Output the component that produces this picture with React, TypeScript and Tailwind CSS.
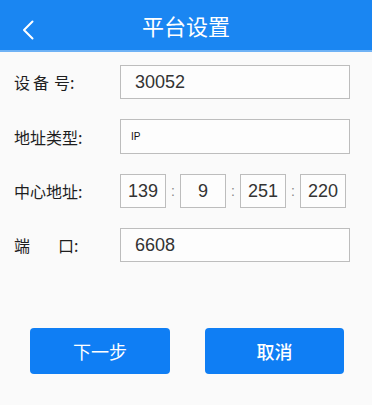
import React from "react";

const cjk = { fontFamily: '"Noto Sans CJK SC", "Noto Sans", sans-serif' };
const num = { fontFamily: '"Liberation Sans", Arial, sans-serif' };

function Label({ children }: { children: React.ReactNode }) {
  return (
    <div className="w-[106px] shrink-0 flex text-[16px] text-[#1e1e1e] leading-none" style={cjk}>
      {children}
    </div>
  );
}

function Box({ v }: { v: string }) {
  return (
    <div
      className="w-[46px] h-[34px] border border-[#bdbdbd] bg-[#fdfdfd] flex items-center justify-center text-[18px] text-[#333]"
      style={num}
    >
      {v}
    </div>
  );
}

function Colon() {
  return (
    <div className="w-[14px] flex items-center justify-center text-[14px] text-[#888]" style={num}>
      :
    </div>
  );
}

export default function App() {
  return (
    <div className="w-[372px] h-[405px] bg-[#fafafa] flex flex-col">
      <div className="h-[52px] bg-[#1a86f2] border-b-2 border-[#6fb2f5] flex items-center relative">
        <svg className="absolute left-[21px] top-[20px]" width="14" height="20" viewBox="0 0 14 20">
          <path d="M11.5 1.5 L3 10 L11.5 18.5" fill="none" stroke="white" strokeWidth="2" strokeLinecap="round" strokeLinejoin="round" />
        </svg>
        <div className="flex-1 text-center text-white text-[22px] leading-none" style={cjk}>
          平台设置
        </div>
      </div>

      <div className="flex flex-col gap-[20px] pt-[13px] pl-[14px]">
        <div className="flex items-center">
          <Label>
            <span className="w-[19px] shrink-0">设</span>
            <span className="w-[21px] shrink-0">备</span>
            <span>号:</span>
          </Label>
          <div className="w-[230px] h-[34px] border border-[#bdbdbd] bg-[#fdfdfd] flex items-center pl-[14px] text-[18px] text-[#333]" style={num}>
            30052
          </div>
        </div>
        <div className="flex items-center">
          <Label>地址类型:</Label>
          <div className="w-[230px] h-[35px] border border-[#bdbdbd] bg-[#fdfdfd] flex items-center pl-[10px] text-[10px] text-[#111]" style={num}>
            IP
          </div>
        </div>
        <div className="flex items-center">
          <Label>中心地址:</Label>
          <div className="flex">
            <Box v="139" />
            <Colon />
            <Box v="9" />
            <Colon />
            <Box v="251" />
            <Colon />
            <Box v="220" />
          </div>
        </div>
        <div className="flex items-center">
          <Label>
            <span className="w-[44px] shrink-0">端</span>
            <span>口:</span>
          </Label>
          <div className="w-[230px] h-[34px] border border-[#bdbdbd] bg-[#fdfdfd] flex items-center pl-[14px] text-[18px] text-[#333]" style={num}>
            6608
          </div>
        </div>
      </div>

      <div className="flex pl-[30px] gap-[35px] mt-[66px]">
        <div className="w-[140px] h-[46px] rounded-[4px] bg-[#0f7ef4] flex items-center justify-center text-white text-[18px]" style={cjk}>
          下一步
        </div>
        <div className="w-[139px] h-[46px] rounded-[4px] bg-[#0f7ef4] flex items-center justify-center text-white text-[18px] font-medium" style={cjk}>
          取消
        </div>
      </div>
    </div>
  );
}
